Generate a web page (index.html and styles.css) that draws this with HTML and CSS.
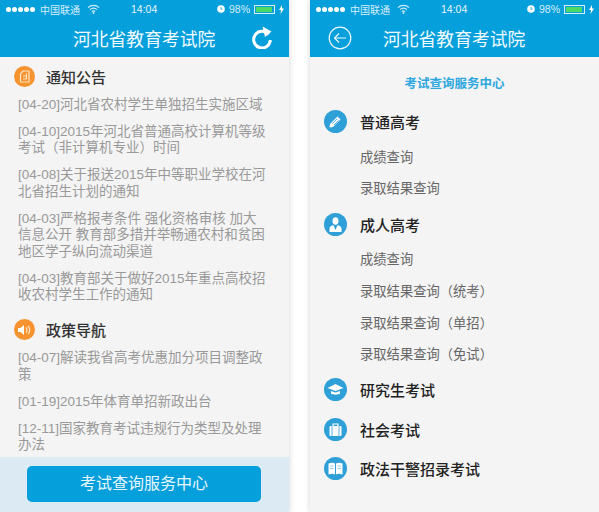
FILE: index.html
```html
<!DOCTYPE html>
<html lang="zh-CN">
<head>
  <meta charset="UTF-8">
  <title>河北省教育考试院</title>
  <link rel="stylesheet" href="styles.css">
</head>
<body>
  <div class="screens">
    <!-- left phone: news list -->
    <div class="phone">
      <div class="top">
        <div class="status">
          <span class="dots"><i></i><i></i><i></i><i></i><i></i></span>
          <span class="carrier">中国联通</span>
          <svg class="wifi" width="13" height="10" viewBox="0 0 13 10"><path d="M1 3.6a8 8 0 0 1 11 0M3 5.6a5 5 0 0 1 7 0M4.9 7.5a2.4 2.4 0 0 1 3.2 0" fill="none" stroke="#cfeaf7" stroke-width="1.2"/><circle cx="6.5" cy="9" r="1" fill="#cfeaf7"/></svg>
          <span class="time">14:04</span>
          <span class="status-right">
            <svg width="8" height="8" viewBox="0 0 8 8"><circle cx="4" cy="4" r="3.8" fill="#fff"/><path d="M4 2v2.2h1.6" fill="none" stroke="#059fdb" stroke-width=".8"/></svg>
            <span class="pct">98%</span>
            <span class="battery"><b></b></span>
            <svg width="5" height="9" viewBox="0 0 5 9"><path d="M3 0 0 5h2L1.500 9 5 3.600H3z" fill="#fff"/></svg>
          </span>
        </div>
        <div class="nav">
          <span class="title">河北省教育考试院</span>
          <svg class="refresh" width="22" height="23" viewBox="0 0 22 23"><path d="M17.500 8.500A8.300 8.300 0 1 0 19.300 14" fill="none" stroke="#fff" stroke-width="3"/><path d="M11.500 0.500 20.500 5.500 14 11z" fill="#fff"/></svg>
        </div>
      </div>
      <div class="news">
        <div class="sec-head">
          <span class="badge orange">
            <svg width="15" height="15" viewBox="0 0 15 15"><path d="M6 2h6v11H3.500V5zM6 7h3.500M6 10h3.500M9.500 4.500V10" fill="none" stroke="#fde3c4" stroke-width="1.200"/></svg>
          </span>
          <span>通知公告</span>
        </div>
        <p class="item">[04-20]河北省农村学生单独招生实施区域</p>
        <p class="item">[04-10]2015年河北省普通高校计算机等级考试（非计算机专业）时间</p>
        <p class="item">[04-08]关于报送2015年中等职业学校在河北省招生计划的通知</p>
        <p class="item">[04-03]严格报考条件 强化资格审核 加大信息公开 教育部多措并举畅通农村和贫困地区学子纵向流动渠道</p>
        <p class="item">[04-03]教育部关于做好2015年重点高校招收农村学生工作的通知</p>
        <div class="sec-head second">
          <span class="badge orange">
            <svg width="16" height="14" viewBox="0 0 16 14"><path d="M1 5h2.500L7 2v10L3.500 9H1z" fill="#fff"/><path d="M9 4.500a3.500 3.500 0 0 1 0 5M11 2.800a6 6 0 0 1 0 8.400" fill="none" stroke="#fde3c4" stroke-width="1.200"/></svg>
          </span>
          <span>政策导航</span>
        </div>
        <p class="item">[04-07]解读我省高考优惠加分项目调整政策</p>
        <p class="item">[01-19]2015年体育单招新政出台</p>
        <p class="item">[12-11]国家教育考试违规行为类型及处理办法</p>
      </div>
      <div class="bottom">
        <div class="big-btn">考试查询服务中心</div>
      </div>
    </div>

    <!-- right phone: service menu -->
    <div class="phone">
      <div class="top">
        <div class="status">
          <span class="dots"><i></i><i></i><i></i><i></i><i></i></span>
          <span class="carrier">中国联通</span>
          <svg class="wifi" width="13" height="10" viewBox="0 0 13 10"><path d="M1 3.6a8 8 0 0 1 11 0M3 5.6a5 5 0 0 1 7 0M4.9 7.5a2.4 2.4 0 0 1 3.2 0" fill="none" stroke="#cfeaf7" stroke-width="1.2"/><circle cx="6.5" cy="9" r="1" fill="#cfeaf7"/></svg>
          <span class="time">14:04</span>
          <span class="status-right">
            <svg width="8" height="8" viewBox="0 0 8 8"><circle cx="4" cy="4" r="3.8" fill="#fff"/><path d="M4 2v2.2h1.6" fill="none" stroke="#059fdb" stroke-width=".8"/></svg>
            <span class="pct">98%</span>
            <span class="battery"><b></b></span>
            <svg width="5" height="9" viewBox="0 0 5 9"><path d="M3 0 0 5h2L1.500 9 5 3.600H3z" fill="#fff"/></svg>
          </span>
        </div>
        <div class="nav nav-back">
          <svg class="back" width="24" height="24" viewBox="0 0 24 24"><circle cx="12" cy="12" r="10.800" fill="none" stroke="#eaf8fd" stroke-width="1.200"/><path d="M18 12H6.500M11 7.500 6.500 12l4.500 4.500" fill="none" stroke="#eaf8fd" stroke-width="1.200"/></svg>
          <span class="title">河北省教育考试院</span>
        </div>
      </div>
      <div class="menu">
        <div class="menu-title">考试查询服务中心</div>
        <div class="group">
          <span class="badge blue">
            <svg width="15" height="15" viewBox="0 0 15 15"><path d="M2 10 9.500 2.500l3 3L5 13l-3.500.5z" fill="#fff"/><path d="M4.500 9.500l4.500-4.500M6 11l4.500-4.500" stroke="#2f9fd8" stroke-width=".8"/></svg>
          </span>
          <span>普通高考</span>
        </div>
        <div class="sub first">成绩查询</div>
        <div class="sub">录取结果查询</div>
        <div class="group adult">
          <span class="badge blue">
            <svg width="17" height="17" viewBox="0 0 17 17"><ellipse cx="8.500" cy="5" rx="3" ry="3.700" fill="#fff"/><path d="M2.500 16v-3.500c0-2 2-3 4-3.300L8.500 14l2-4.800c2 .3 4 1.300 4 3.300V16z" fill="#fff"/></svg>
          </span>
          <span>成人高考</span>
        </div>
        <div class="sub first">成绩查询</div>
        <div class="sub">录取结果查询（统考）</div>
        <div class="sub">录取结果查询（单招）</div>
        <div class="sub">录取结果查询（免试）</div>
        <div class="group grad">
          <span class="badge blue">
            <svg width="17" height="13" viewBox="0 0 17 13"><path d="M8.500 1 16.500 5 8.500 8 .5 5z" fill="#fff"/><path d="M4 8v2.500c1.500 1.500 7.500 1.500 9 0V8L8.500 9.500z" fill="#fff"/></svg>
          </span>
          <span>研究生考试</span>
        </div>
        <div class="group next">
          <span class="badge blue">
            <svg width="15" height="15" viewBox="0 0 15 15"><path d="M5 4V2h5v2" fill="none" stroke="#fff" stroke-width="1.200"/><rect x="1.500" y="4" width="12" height="10" rx="1" fill="#fff"/><path d="M4 4v10M11 4v10" stroke="#2f9fd8" stroke-width=".8"/></svg>
          </span>
          <span>社会考试</span>
        </div>
        <div class="group next">
          <span class="badge blue">
            <svg width="15" height="13" viewBox="0 0 15 13"><path d="M.5 1.500c2.500-1 5-1 6.500 0v11c-1.500-1-4-1-6.500 0zM14.500 1.500c-2.500-1-5-1-6.500 0v11c1.500-1 4-1 6.500 0z" fill="#fff"/><path d="M2 4h3.500M2 6.500h3.500M9.500 4H13M9.500 6.500H13" stroke="#7cc4e8" stroke-width=".8"/></svg>
          </span>
          <span>政法干警招录考试</span>
        </div>
      </div>
    </div>
  </div>
</body>
</html>
```

FILE: styles.css
```css
* {
  box-sizing: border-box;
}

body {
  margin: 0;
  background: #fff;
  font-family: "Liberation Sans", "Noto Sans CJK SC", sans-serif;
}

.screens {
  display: flex;
  justify-content: space-between;
  width: 599px;
  height: 512px;
  overflow: hidden;
}

.phone {
  display: flex;
  flex-direction: column;
  width: 289px;
  height: 512px;
  background: #f4f4f4;
  box-shadow: 0 0 6px rgba(0, 0, 0, 0.18);
}

.top {
  height: 57px;
  background: #059fdb;
  color: #fff;
}

.status {
  display: flex;
  align-items: center;
  height: 18px;
  padding: 0 5px 0 6px;
  font-size: 10px;
  color: #d5eef9;
}

.dots {
  display: flex;
  gap: 1px;
}

.dots i {
  width: 5px;
  height: 5px;
  border-radius: 50%;
  background: #fff;
}

.carrier {
  margin-left: 5px;
}

.wifi {
  margin-left: 7px;
}

.time {
  margin-left: 31px;
  font-size: 10.500px;
  color: #eaf7fd;
}

.status-right {
  display: flex;
  align-items: center;
  gap: 4px;
  margin-left: auto;
}

.pct {
  font-size: 10.500px;
}

.battery {
  width: 21px;
  height: 9px;
  padding: 1px;
  border: 1px solid #d5eef9;
}

.battery b {
  display: block;
  width: 95%;
  height: 100%;
  background: #4cd964;
}

.nav {
  display: flex;
  align-items: center;
  height: 39px;
  padding: 0 16px 0 73px;
}

.title {
  font-size: 17.800px;
  color: #f2fbff;
}

.refresh {
  margin-left: auto;
}

.nav-back {
  padding-left: 18px;
}

.back {
  margin-right: 31px;
}

.news {
  flex: 1;
  padding: 9px 20px 0 18px;
  overflow: hidden;
}

.sec-head {
  display: flex;
  align-items: center;
  gap: 11px;
  height: 21px;
  margin-left: -4px;
  font-size: 15px;
  font-weight: 500;
  color: #333;
}

.sec-head.second {
  margin-top: 16px;
}

.badge {
  display: flex;
  align-items: center;
  justify-content: center;
  flex-shrink: 0;
  border-radius: 50%;
}

.orange {
  width: 21px;
  height: 21px;
  background: #f7932e;
}

.item {
  margin: 0 0 10.600px;
  font-size: 13.500px;
  line-height: 16.400px;
  color: #999;
}

.sec-head + .item {
  margin-top: 10px;
}

.bottom {
  height: 55px;
  padding: 9px 28px 0 27px;
  background: #dcebf3;
}

.big-btn {
  height: 36px;
  border-radius: 5px;
  background: #059fdb;
  color: #e8f7fd;
  font-size: 16px;
  line-height: 36px;
  text-align: center;
}

.menu {
  flex: 1;
  padding: 19px 0 0 14px;
}

.menu-title {
  margin-bottom: 18px;
  padding-right: 14px;
  font-size: 12.500px;
  font-weight: bold;
  line-height: 16px;
  color: #2ea7df;
  text-align: center;
}

.group {
  display: flex;
  align-items: center;
  gap: 13px;
  height: 23px;
  font-size: 15px;
  font-weight: 500;
  color: #222;
}

.blue {
  width: 23px;
  height: 23px;
  background: #2f9fd8;
}

.sub {
  height: 31.700px;
  padding-left: 36px;
  font-size: 13.300px;
  line-height: 31.700px;
  color: #666;
}

.sub.first {
  margin-top: 8.500px;
}

.group.adult {
  margin-top: 8px;
}

.group.grad {
  margin-top: 7px;
}

.group.next {
  margin-top: 16.500px;
}
```
